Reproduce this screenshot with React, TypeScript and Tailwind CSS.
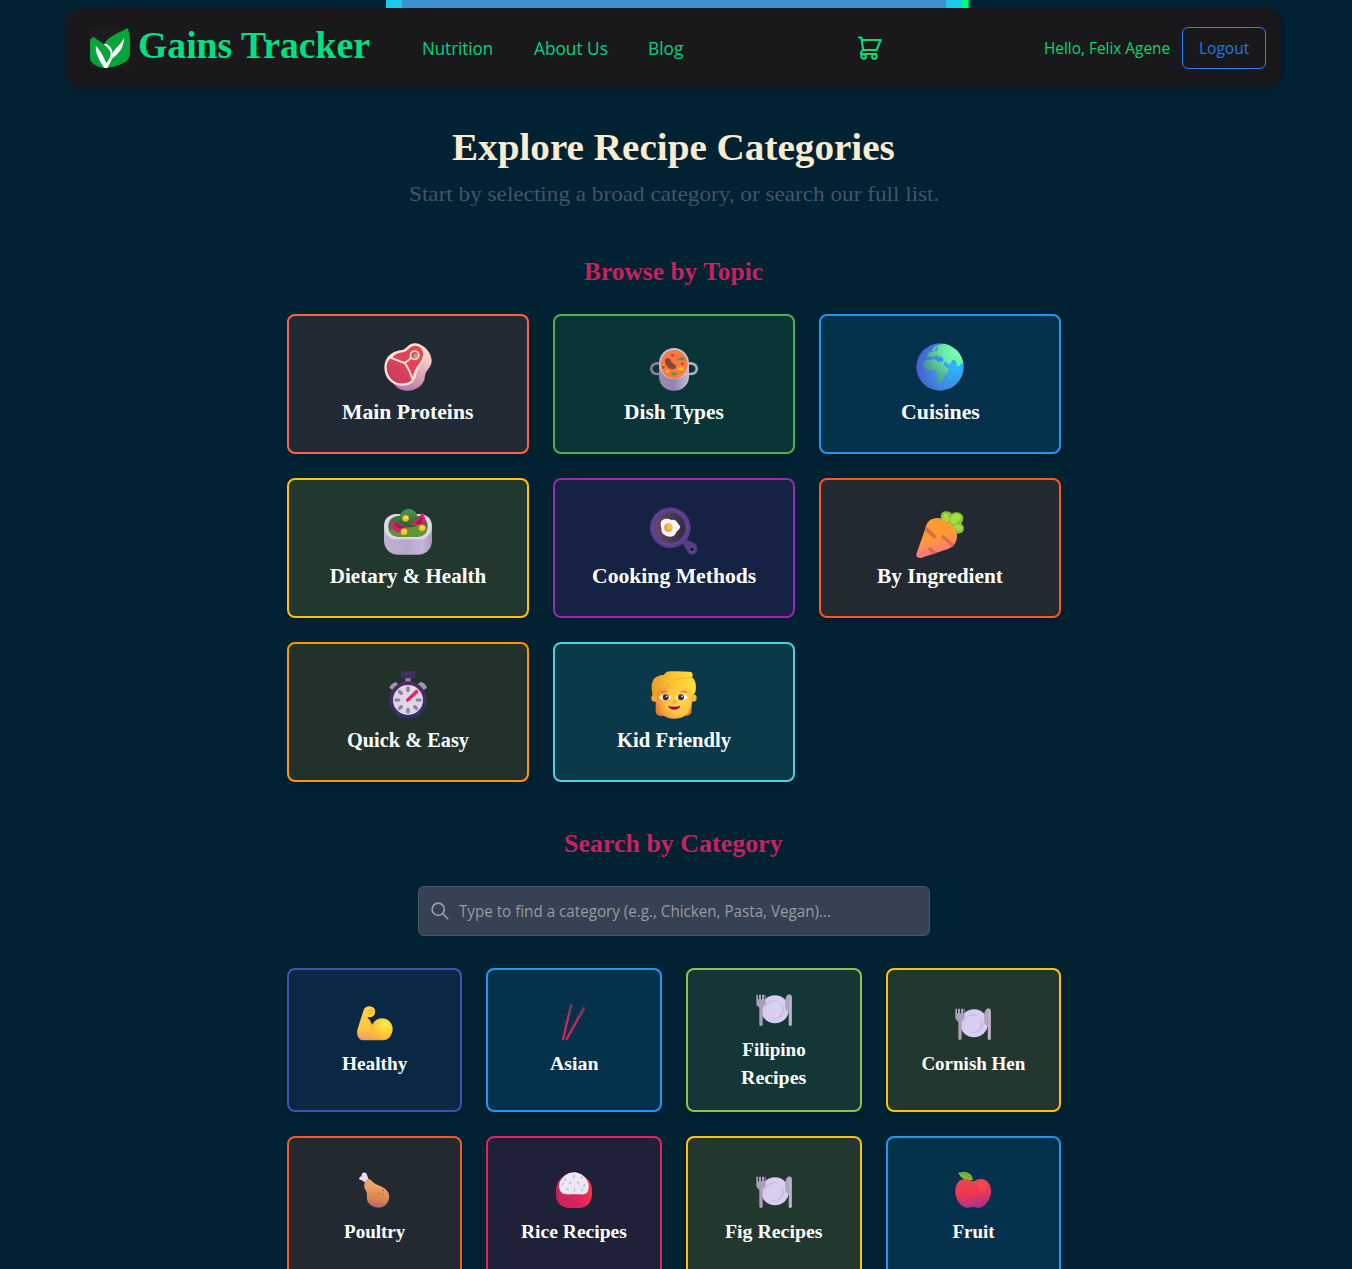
import { useLayoutEffect, useRef, useState } from "react";
import type { ReactNode } from "react";

/* Single line of text whose glyphs are stretched so that it spans the given width. */
function Fit({ text, width }: { text: string; width: number }) {
  const ref = useRef<HTMLSpanElement>(null);
  const [scale, setScale] = useState(1);
  useLayoutEffect(() => {
    if (ref.current) setScale(width / ref.current.offsetWidth);
  }, [text, width]);
  return (
    <span className="inline-block whitespace-nowrap" style={{ width }}>
      <span ref={ref} className="inline-block origin-left" style={{ transform: `scaleX(${scale})` }}>
        {text}
      </span>
    </span>
  );
}

function Gradient({ id, from, to, x = "0", y = "1" }: { id: string; from: string; to: string; x?: string; y?: string }) {
  return (
    <linearGradient id={id} x1="0" y1="0" x2={x} y2={y}>
      <stop offset="0" stopColor={from} />
      <stop offset="1" stopColor={to} />
    </linearGradient>
  );
}

function Art({ size, children }: { size: "lg" | "sm"; children: ReactNode }) {
  return size === "lg" ? (
    <svg viewBox="0 0 144 144" className="mt-px -mb-px size-12 shrink-0 overflow-visible">{children}</svg>
  ) : (
    <svg viewBox="0 0 108 108" className="my-0.5 size-9 shrink-0 overflow-visible">{children}</svg>
  );
}

const Steak = () => (
  <Art size="lg">
    <defs>
      <Gradient id="stSide" from="#ffd2c4" to="#a765a8" x="-0.3" />
      <linearGradient id="stMeat" x1="1" y1="0" x2="0" y2="1"><stop stopColor="#ec4450" /><stop offset=".5" stopColor="#e1435a" /><stop offset="1" stopColor="#bd3a63" /></linearGradient>
    </defs>
    <path d="M92 2C125 2 144 35 143 54C142 74 125 82 123 98C122 128 92 144 70 143C48 143 34 132 26 118Z" fill="url(#stSide)" />
    <path d="M55 21C66 20 72 1 93 1C114 2 124 17 124 37C123 59 101 71 97 93C94 116 79 129 54 128C22 127 1 105 1 73C2 39 27 23 55 21Z" fill="#fde3d0" />
    <path d="M25 45C32 30 48 30 62 26C75 20 79 8 93 8C111 9 118 21 117 36C116 54 98 68 91 86C85 100 90 112 73 118C38 132 8 106 8 73C8 60 14 50 22 46Z" fill="url(#stMeat)" />
    <path d="M20 44L60 60C72 57 76 48 85 40M62 60C73 74 79 88 86 110" fill="none" stroke="#fde3d0" strokeWidth="6" />
    <circle cx="92" cy="37" r="15" fill="#fde3d0" />
    <circle cx="92" cy="37" r="10" fill="#a7615e" />
    <circle cx="95" cy="39" r="7" fill="#d39a86" />
  </Art>
);

const Stew = () => (
  <Art size="lg">
    <defs>
      <linearGradient id="pot"><stop stopColor="#9b8ab0" /><stop offset=".5" stopColor="#9583b5" /><stop offset="1" stopColor="#c5bfcf" /></linearGradient>
    </defs>
    <path d="M34 61H21C-2 63-2 92 21 93H34" fill="none" stroke="#8b7c9f" strokeWidth="8" />
    <path d="M110 61H123C146 63 146 92 123 93H110" fill="none" stroke="#b2acbd" strokeWidth="8" />
    <path d="M27 58H117V102C116 126 98 143 72 143C46 143 28 126 27 102Z" fill="url(#pot)" />
    <ellipse cx="72" cy="62" rx="45" ry="47" fill="#c8bfd0" />
    <ellipse cx="72" cy="64" rx="40" ry="43" fill="#fa7a3f" />
    <path d="M50 46C58 43 63 50 64 57C68 62 77 63 78 71C76 82 61 81 53 72C45 64 41 50 50 46Z" fill="#854735" />
    <path d="M75 51C86 52 88 42 98 42C105 45 104 50 99 52Z" fill="#3ba252" />
    <path d="M62 94C65 86 76 84 82 94C76 100 69 98 62 94Z" fill="#4ca64d" />
    <path d="M83 79C87 70 100 69 101 80C96 84 89 83 83 79ZM47 85C50 79 56 80 58 86C54 90 50 88 47 85Z" fill="#ffc42b" />
    <circle cx="67" cy="37" r="4" fill="#db342c" /><circle cx="97" cy="62" r="4" fill="#db342c" /><circle cx="40" cy="73" r="4" fill="#db342c" />
  </Art>
);

const Globe = () => (
  <Art size="lg">
    <defs>
      <radialGradient id="sea" cx=".85" cy=".5" r=".9"><stop stopColor="#2bb8ff" /><stop offset=".6" stopColor="#3e87dc" /><stop offset="1" stopColor="#4c55c9" /></radialGradient>
      <radialGradient id="land" cx=".85" cy=".2" r=".85"><stop stopColor="#7affb4" /><stop offset=".4" stopColor="#6eeeae" /><stop offset="1" stopColor="#48a28d" /></radialGradient>
      <clipPath id="world"><circle cx="72" cy="72" r="71" /></clipPath>
    </defs>
    <circle cx="72" cy="72" r="71" fill="url(#sea)" />
    <path clipPath="url(#world)" d="M33 40L39 28L50 26L48 20L56 10L75 4L90 0L113 9L145 46V68L136 60L130 70L124 69L119 53L108 51L105 61L97 65L88 55L82 63L89 72L99 77L95 88L86 97L81 112L75 121L67 121L62 108L64 98L59 81L34 81L24 70L24 62L31 51L46 50L61 48L63 55L80 57L83 49L69 46L66 38L59 36L57 41L50 43Z" fill="url(#land)" />
    <path d="M58 14L66 11L63 24L54 28L60 20ZM50 45L58 40L66 46L74 40L82 47L76 50L68 47L60 50Z" fill="#3892e2" />
    <ellipse cx="101" cy="101" rx="2" ry="5" fill="#54cda0" />
  </Art>
);

const Salad = () => (
  <Art size="lg">
    <defs>
      <linearGradient id="bowl"><stop stopColor="#bfb3cc" /><stop offset=".5" stopColor="#b7a8cc" /><stop offset=".8" stopColor="#c4b8d6" /><stop offset="1" stopColor="#aa99bd" /></linearGradient>
      <Gradient id="leaf" from="#4c9b4d" to="#275d37" />
    </defs>
    <path d="M0 56C0 33 17 21 42 21H102C128 21 144 34 144 57V101C143 126 126 143 100 143H44C18 143 1 126 0 101Z" fill="url(#bowl)" />
    <rect x="1" y="21" width="142" height="76" rx="36" fill="#dfd7e5" />
    <rect x="13" y="27" width="118" height="62" rx="29" fill="#377c36" />
    <path d="M15 73C34 51 112 43 130 61C129 79 118 89 102 89H42C26 88 20 83 15 73Z" fill="#5f9537" />
    <path d="M39 45C44 44 44 8 73 6C97 6 101 28 103 36C112 42 105 54 89 59C67 64 40 60 39 45Z" fill="url(#leaf)" />
    <path d="M21 39L69 60C66 76 51 80 39 76C23 70 18 57 21 39ZM80 54L116 17C126 31 126 50 116 55Z" fill="#d52860" />
    <path d="M29 46L62 60C54 70 34 66 29 46ZM92 51L113 28C118 38 116 48 109 51Z" fill="#8c2459" />
    <circle cx="65" cy="34" r="10" fill="#f3bb2e" /><circle cx="60" cy="74" r="10" fill="#f3bb2e" /><circle cx="114" cy="63" r="10" fill="#f3bb2e" />
    <circle cx="67" cy="32" r="5" fill="#ffdc4d" /><circle cx="62" cy="72" r="5" fill="#ffdc4d" /><circle cx="116" cy="61" r="5" fill="#ffdc4d" />
  </Art>
);

const Pan = () => (
  <Art size="lg">
    <defs><linearGradient id="pan"><stop stopColor="#684768" /><stop offset="1" stopColor="#302d3b" /></linearGradient></defs>
    <path d="M96 108L109 98L136 110C147 123 141 142 127 143C120 143 116 139 113 134Z" fill="#573b85" />
    <circle cx="126" cy="127" r="8" fill="#172445" stroke="#7b5996" strokeWidth="3" />
    <circle cx="61" cy="62" r="61" fill="#573e86" />
    <circle cx="61" cy="61" r="52" fill="none" stroke="#624693" strokeWidth="4" />
    <circle cx="61" cy="62" r="45" fill="url(#pan)" />
    <path d="M35 41C44 33 55 35 65 39C79 36 81 48 90 57C92 65 83 70 78 77C75 91 54 92 44 84C31 76 36 67 33 59C32 49 31 47 35 41Z" fill="#fff3ff" />
    <circle cx="55" cy="62" r="13" fill="#f4a337" /><circle cx="58" cy="59" r="8" fill="#ffc24b" />
  </Art>
);

const Carrot = () => (
  <Art size="lg">
    <defs><linearGradient id="carrot" x1=".4" y1="0" x2=".62" y2="1"><stop stopColor="#ff9b2b" /><stop offset=".5" stopColor="#ff9a38" /><stop offset=".9" stopColor="#ff7484" /></linearGradient></defs>
    <g transform="translate(0 11)">
      <path d="M76 31C71 11 78 1 91 2C101 2 105 7 108 9C120 1 136 5 141 17C144 29 138 35 136 39C148 47 146 65 132 68C122 71 113 66 107 59Z" fill="#87bf38" />
      <path d="M83 30C78 13 83 7 91 8C101 10 101 26 97 35ZM103 31C102 11 122 3 134 14C140 28 122 41 106 42ZM113 48C120 38 136 41 139 51C137 64 122 63 113 48Z" fill="#a4dc42" />
      <path d="M1 130L28 54C32 29 52 17 77 24C100 31 122 52 123 73C124 94 113 109 94 116L16 141C6 144-1 138 1 130Z" fill="url(#carrot)" />
      <path d="M31 55L55 78M82 79L109 103M42 115L53 126" fill="none" stroke="#cd6446" strokeWidth="11" strokeLinecap="round" opacity=".8" />
    </g>
  </Art>
);

const Stopwatch = () => (
  <Art size="lg">
    <defs><Gradient id="watch" from="#562857" to="#33316f" /></defs>
    <path d="M64 17H80V36H64Z" fill="#8d898f" /><rect x="52" y="0" width="42" height="22" rx="5" fill="url(#watch)" />
    <path d="M27 58L17 51C13 47 33 29 38 35L46 44ZM117 58L128 51C132 46 112 27 106 35L98 44Z" fill="#9f9ba5" />
    <circle cx="72" cy="87" r="56" fill="url(#watch)" />
    <circle cx="72" cy="87" r="45" fill="#ddd7e8" />
    <g fill="#8e849b">
      {[0, 45, 90, 135, 180, 225, 270, 315].map((a) => <ellipse key={a} cx="72" cy="55" rx="5.5" ry="9" transform={`rotate(${a} 72 87)`} />)}
    </g>
    <path d="M71 87L98 62" fill="none" stroke="#e9235e" strokeWidth="10" strokeLinecap="round" />
  </Art>
);

const Child = () => (
  <Art size="lg">
    <defs>
      <radialGradient id="face" cx=".65" cy=".5" r=".65"><stop stopColor="#ffda48" /><stop offset=".6" stopColor="#ffc244" /><stop offset="1" stopColor="#f28b38" /></radialGradient>
      <linearGradient id="hair"><stop stopColor="#e89b25" /><stop offset=".5" stopColor="#ffc62e" /><stop offset="1" stopColor="#ffe23a" /></linearGradient>
    </defs>
    <path d="M17 84H126L124 126C116 138 97 135 91 131H48C29 140 17 133 17 118Z" fill="#ee7f2f" />
    <circle cx="15" cy="81" r="11" fill="#f4a935" /><circle cx="129" cy="81" r="11" fill="#f6b940" />
    <path d="M20 55C29 25 113 24 125 57V95C123 126 102 143 72 143C43 143 22 125 20 96Z" fill="url(#face)" />
    <path d="M7 68C-1 29 13 13 42 12C48-1 63 1 81 1L119 2C129 3 130 15 126 19C135 26 140 39 137 60C134 69 128 73 125 73C123 59 120 55 110 52C84 54 63 47 55 39C46 48 43 52 26 55C21 62 20 70 20 81C13 80 8 77 7 68Z" fill="url(#hair)" />
    <path d="M62 30C76 24 111 22 127 18" fill="none" stroke="#efb328" strokeWidth="3" />
    <path d="M33 65Q41 58 51 63M92 63Q102 58 110 65" fill="none" stroke="#d57531" strokeWidth="4" />
    <ellipse cx="45" cy="79" rx="17" ry="8" fill="#fff" /><ellipse cx="96" cy="79" rx="17" ry="8" fill="#fff" />
    <circle cx="47" cy="79" r="9" fill="#44303c" /><circle cx="93" cy="79" r="9" fill="#44303c" /><circle cx="50" cy="76" r="2.5" fill="#fff" /><circle cx="96" cy="76" r="2.5" fill="#fff" />
    <ellipse cx="72" cy="94" rx="8" ry="7" fill="#ffb049" />
    <path d="M54 104C65 108 79 108 91 104C88 120 58 120 54 104Z" fill="#8b164f" />
  </Art>
);

const Muscle = () => (
  <Art size="sm">
    <defs>
      <linearGradient id="arm" x1="0" y1="0" x2="0" y2="1"><stop stopColor="#ffd447" /><stop offset=".7" stopColor="#ffc23c" /><stop offset="1" stopColor="#ee9570" /></linearGradient>
      <radialGradient id="bicep" cx=".65" cy=".3" r=".8"><stop stopColor="#ffed4c" /><stop offset="1" stopColor="#ffae2c" /></radialGradient>
    </defs>
    <g transform="translate(0 2)">
      <path d="M20 16C25 2 46 2 53 13C57 25 53 35 41 38L31 38L47 62L96 57C112 84 101 105 80 107H21C4 107-2 91 1 75Z" fill="url(#arm)" />
      <circle cx="75" cy="73" r="32" fill="url(#bicep)" />
      <path d="M35 40C46 52 43 66 46 74C51 85 61 91 74 102H34C44 90 38 67 35 40Z" fill="#ffb735" opacity=".6" />
      <path d="M29 23Q40 12 52 21M34 26L46 26" fill="none" stroke="#df9830" strokeWidth="2" />
    </g>
  </Art>
);

const Chopsticks = () => (
  <Art size="sm">
    <path d="M45 4L21 105M83 13L32 105" fill="none" stroke="#d92352" strokeWidth="7" strokeLinecap="round" />
    <path d="M46 6L41 24M84 14L73 34" fill="none" stroke="#5c4054" strokeWidth="8" strokeLinecap="round" />
  </Art>
);

const Dish = () => (
  <Art size="sm">
    <defs><linearGradient id="plate" x2="1" y2="1"><stop stopColor="#bda7df" /><stop offset=".45" stopColor="#d9cdf0" /><stop offset="1" stopColor="#b7add0" /></linearGradient></defs>
    <g transform="translate(0 7)">
      <circle cx="57" cy="51" r="42" fill="#dacdf2" />
      <circle cx="55" cy="51" r="29" fill="url(#plate)" />
      <circle cx="53" cy="53" r="25" fill="#d9cff1" />
      <path d="M1 8Q3 5 6 8V21H9V8Q12 5 15 8V21H18V8Q22 5 24 8V21H26V8Q28 6 29 9V32C29 39 24 43 20 46V98Q14 104 10 98V46C4 43 1 39 1 32Z" fill="#aa9eb9" />
      <path d="M89 53C86 35 85 7 101 6Q108 7 108 15V98Q103 104 98 98V59Z" fill="#b1a5be" />
      <path d="M102 10V100" fill="none" stroke="#c6bad0" strokeWidth="3" />
    </g>
  </Art>
);

const Drumstick = () => (
  <Art size="sm">
    <defs><linearGradient id="chicken" x1=".3" y1=".2" x2=".2" y2="1"><stop stopColor="#efa565" /><stop offset=".65" stopColor="#d58050" /><stop offset="1" stopColor="#b15597" /></linearGradient></defs>
    <path d="M25 32L15 25C4 26 4 14 14 13C11 1 27-3 30 9L36 25Z" fill="#eeddf6" />
    <path d="M24 30C24 21 37 19 44 26C57 43 82 40 93 60C103 79 91 98 78 104C64 111 43 107 33 91C26 77 34 67 26 55C20 47 21 37 24 30Z" fill="url(#chicken)" />
    <circle cx="66" cy="64" r="3" fill="#bf7141" /><circle cx="78" cy="55" r="3" fill="#bf7141" /><circle cx="78" cy="67" r="3" fill="#bf7141" />
  </Art>
);

const Rice = () => (
  <Art size="sm">
    <defs><linearGradient id="rbowl" x2="1"><stop stopColor="#c82459" /><stop offset=".7" stopColor="#dc2360" /><stop offset="1" stopColor="#ff3045" /></linearGradient></defs>
    <path d="M0 55C1 24 18 15 31 11H79C101 20 108 36 108 57V65C107 95 91 108 63 108H43C14 108 0 91 0 65Z" fill="url(#rbowl)" />
    <path d="M11 52C3 30 25 2 53 1C84 1 105 32 97 54C92 71 80 67 54 67C28 67 17 70 11 52Z" fill="#ede9f4" />
    <path d="M25 19L29 25M54 9L53 17M74 18L79 15M19 39L22 32M40 34L47 30M65 30L68 36M86 37L84 43M31 51L37 54M56 49L55 57M76 56L80 52" fill="none" stroke="#bdb7c8" strokeWidth="4" strokeLinecap="round" />
  </Art>
);

const Apple = () => (
  <Art size="sm">
    <defs><linearGradient id="apple" x2=".2" y2="1"><stop stopColor="#ed4a4e" /><stop offset=".6" stopColor="#ec3654" /><stop offset="1" stopColor="#ad348a" /></linearGradient></defs>
    <path d="M50 27C32 14 1 20 1 58C0 83 19 108 39 108L54 104L69 108C89 108 109 81 108 58C108 20 77 14 58 27Z" fill="url(#apple)" />
    <path d="M9 2C28-3 51-1 54 24C38 26 19 22 14 9Z" fill="#82b934" /><path d="M15 3Q40 6 54 24" fill="none" stroke="#578c32" strokeWidth="2" />
    <ellipse cx="82" cy="42" rx="13" ry="16" fill="#ff6265" opacity=".3" />
  </Art>
);

const topics = [
  { label: "Main Proteins", width: 131, icon: <Steak />, tone: "border-[#ff6347] bg-[#ff6347]/[0.133]" },
  { label: "Dish Types", width: 100, icon: <Stew />, tone: "border-[#4caf50] bg-[#4caf50]/[0.133]" },
  { label: "Cuisines", width: 79, icon: <Globe />, tone: "border-[#2196f3] bg-[#2196f3]/[0.133]" },
  { label: "Dietary & Health", width: 156, icon: <Salad />, tone: "border-[#ffc107] bg-[#ffc107]/[0.133]" },
  { label: "Cooking Methods", width: 164, icon: <Pan />, tone: "border-[#9c27b0] bg-[#9c27b0]/[0.133]" },
  { label: "By Ingredient", width: 126, icon: <Carrot />, tone: "border-[#ff5722] bg-[#ff5722]/[0.133]" },
  { label: "Quick & Easy", width: 122, icon: <Stopwatch />, tone: "border-[#ff9800] bg-[#ff9800]/[0.133]" },
  { label: "Kid Friendly", width: 114, icon: <Child />, tone: "border-[#4dd0e1] bg-[#4dd0e1]/[0.133]" },
];

const categories: { lines: [string, number][]; icon: ReactNode; tone: string }[] = [
  { lines: [["Healthy", 65]], icon: <Muscle />, tone: "border-[#3f51b5] bg-[#3f51b5]/[0.133]" },
  { lines: [["Asian", 48]], icon: <Chopsticks />, tone: "border-[#2196f3] bg-[#2196f3]/[0.133]" },
  { lines: [["Filipino", 63], ["Recipes", 65]], icon: <Dish />, tone: "border-[#8bc34a] bg-[#8bc34a]/[0.133]" },
  { lines: [["Cornish Hen", 104]], icon: <Dish />, tone: "border-[#ffc107] bg-[#ffc107]/[0.133]" },
  { lines: [["Poultry", 61]], icon: <Drumstick />, tone: "border-[#ff5722] bg-[#ff5722]/[0.133]" },
  { lines: [["Rice Recipes", 106]], icon: <Rice />, tone: "border-[#e91e63] bg-[#e91e63]/[0.133]" },
  { lines: [["Fig Recipes", 97]], icon: <Dish />, tone: "border-[#ffc107] bg-[#ffc107]/[0.133]" },
  { lines: [["Fruit", 42]], icon: <Apple />, tone: "border-[#2196f3] bg-[#2196f3]/[0.133]" },
];

function Logo() {
  return (
    <svg viewBox="0 0 120 120" className="size-10 shrink-0">
      <path d="M0 0H120V120H0Z" fill="#1d1d1f" />
      <path d="M0 35L10 26L42 49C55 25 79 19 113 0Q120 17 120 34V76C118 105 87 115 50 120H40C17 115 4 106 0 94Z" fill="#08a43b" />
      <path d="M17 54C29 63 42 88 49 106C59 94 63 83 62 73C58 64 50 55 41 49L49 47C61 54 68 64 68 77C75 58 93 51 102 29C102 56 88 77 68 90L52 120H43C28 97 17 80 17 54Z" fill="#fff" />
    </svg>
  );
}

function Cart() {
  return (
    <svg viewBox="0 0 24 24" className="size-6 shrink-0" fill="none" stroke="#05df72" strokeWidth="2.1" strokeLinecap="round" strokeLinejoin="round">
      <path d="M1 1.5H3.3L5.2 14H18.6L22.6 4H4M5.2 14C3.6 14.8 2.7 15.9 3 18H18.3" />
      <circle cx="5.6" cy="20.5" r="2.3" />
      <circle cx="16.4" cy="20.5" r="2.3" />
    </svg>
  );
}

export default function App() {
  return (
    <div className="flex h-[1269px] w-full flex-col overflow-hidden bg-[#002233] pr-1 font-['Liberation_Serif',serif]">
      <div className="flex h-2 shrink-0 pl-[386px]">
        <div className="w-4 bg-[#1ec8e7]" />
        <div className="w-[544px] bg-[#3c91ce]" />
        <div className="w-4 bg-[#1ec8e7]" />
        <div className="w-[9px] bg-linear-to-r from-[#00ff7f] from-60% to-[#002233]" />
      </div>

      <header className="mx-auto flex h-20 w-[1216px] shrink-0 items-center rounded-2xl bg-[#19191b] pr-4 pl-6 font-['Open_Sans',sans-serif] shadow-md">
        <Logo />
        <div className="ml-2 w-[284px] pb-1.5 font-['Liberation_Serif',serif] text-[38px] leading-10 font-bold text-[#00df82]">
          <Fit text="Gains Tracker" width={232} />
        </div>
        <nav className="flex w-[436px] gap-10 text-[17.5px] leading-7 text-[#00d47e]">
          <Fit text="Nutrition" width={71.5} />
          <Fit text="About Us" width={74} />
          <Fit text="Blog" width={35.5} />
        </nav>
        <Cart />
        <div className="ml-auto flex items-center gap-3 text-[15.5px] leading-6">
          <span className="text-[#05d86c]"><Fit text="Hello, Felix Agene" width={126} /></span>
          <button className="flex h-[42px] w-[84px] items-center justify-center rounded-md border border-[#2b7fff] text-[#2b74e5]">
            <Fit text="Logout" width={50} />
          </button>
        </div>
      </header>

      <main className="mx-auto flex w-[774.4px] shrink-0 flex-col items-center pt-[39px]">
        <h1 className="text-[38px] leading-10 font-bold text-[#fdebd0]"><Fit text="Explore Recipe Categories" width={443} /></h1>
        <p className="mt-[13px] text-[21px] leading-7 text-[#465366]"><Fit text="Start by selecting a broad category, or search our full list." width={530} /></p>

        <h2 className="mt-12 text-[25px] leading-8 font-bold text-[#c8215f]"><Fit text="Browse by Topic" width={179} /></h2>
        <div className="mt-[26px] grid w-full grid-cols-3 gap-6">
          {topics.map((t) => (
            <div key={t.label} className={`flex h-[140px] flex-col items-center justify-center rounded-lg border-2 shadow-md ${t.tone}`}>
              {t.icon}
              <h3 className="mt-2 text-[21px] leading-7 font-bold text-white"><Fit text={t.label} width={t.width} /></h3>
            </div>
          ))}
        </div>

        <h2 className="mt-[46px] text-[25px] leading-8 font-bold text-[#c8215f]"><Fit text="Search by Category" width={219} /></h2>
        <div className="mt-[26px] flex h-[50px] w-[512px] items-center rounded-md border border-[#4a5565] bg-[#364153] pl-3 font-['Open_Sans',sans-serif] text-[15.5px] leading-6 text-[#999b9e]">
          <svg viewBox="0 0 18 18" className="mr-[10px] size-[18px]" fill="none" stroke="#99a1af" strokeWidth="1.6" strokeLinecap="round">
            <circle cx="7.2" cy="7.2" r="6.1" /><path d="M11.8 11.8L16.8 16.8" />
          </svg>
          <Fit text="Type to find a category (e.g., Chicken, Pasta, Vegan)..." width={372} />
        </div>

        <div className="mt-8 grid w-full grid-cols-4 gap-6">
          {categories.map((c) => (
            <div key={c.lines[0][0]} className={`flex h-36 flex-col items-center justify-center rounded-lg border-2 shadow-md ${c.tone}`}>
              {c.icon}
              <h4 className="mt-2 flex flex-col items-center text-[19px] leading-7 font-bold text-white">
                {c.lines.map(([text, width]) => <Fit key={text} text={text} width={width} />)}
              </h4>
            </div>
          ))}
        </div>
      </main>
    </div>
  );
}
